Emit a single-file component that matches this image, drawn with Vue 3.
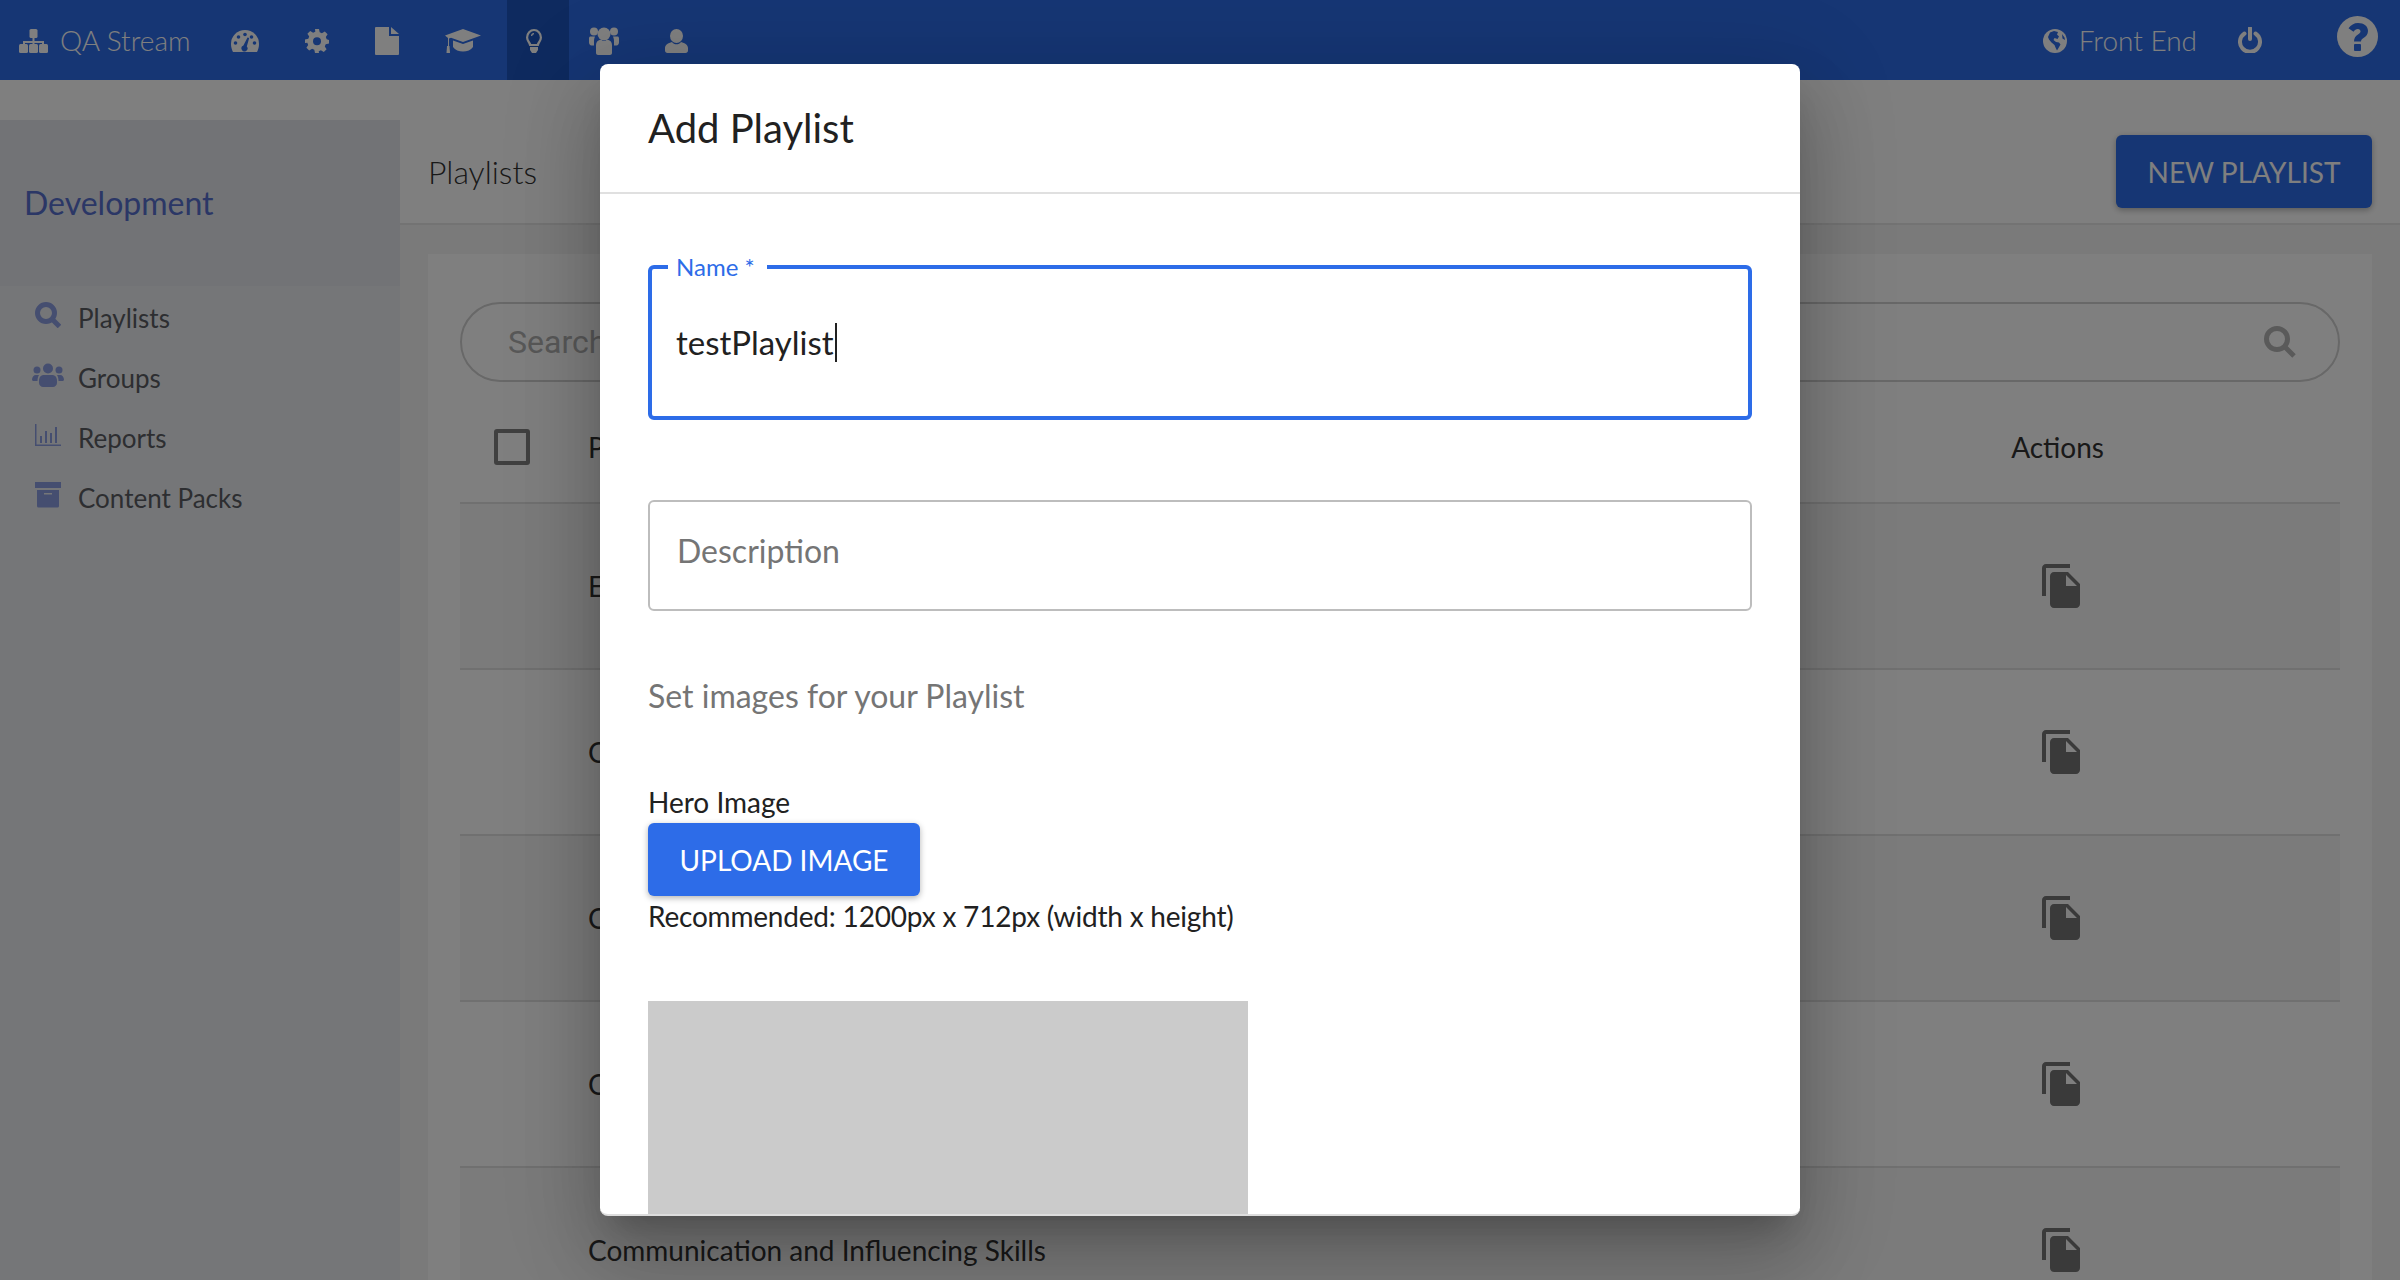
<template>
  <div class="app">
    <header class="topbar">
      <div class="brand">
        <svg class="brand-icon" viewBox="0 0 29 24" width="29" height="24">
          <rect x="10.500" y="0" width="8" height="9" rx="1.500" />
          <path d="M13.500 8h2v4h9.500v5h-2v-3h-7.500v3h-2v-3H6v3H4v-5h9.500z" />
          <rect x="0" y="15" width="9" height="9" rx="1.500" />
          <rect x="10" y="15" width="9" height="9" rx="1.500" />
          <rect x="20" y="15" width="9" height="9" rx="1.500" />
        </svg>
        <span>QA Stream</span>
      </div>
      <nav class="nav">
        <a class="nav-link">
          <svg viewBox="0 0 28 22" width="28" height="22">
            <path d="M14 0a14 14 0 0 1 14 14c0 3-.8 5.800-2 8H2c-1.200-2.200-2-5-2-8A14 14 0 0 1 14 0z" />
            <g class="cut">
              <circle cx="14" cy="4.500" r="1.800" />
              <circle cx="7.500" cy="7" r="1.800" />
              <circle cx="20.500" cy="7" r="1.800" />
              <circle cx="4.500" cy="13" r="1.800" />
              <circle cx="23.500" cy="13" r="1.800" />
              <path d="M16.500 7.500l1.700.6-2.400 8.400a3 3 0 1 1-3.400-.9z" />
            </g>
          </svg>
        </a>
        <a class="nav-link">
          <svg viewBox="0 0 24 24" width="24" height="24">
            <path d="M10 0h4l.7 3.300 2.200.9L19.800 2.400l2.800 2.800-1.800 2.900.9 2.200L24 11v3.500l-3.300.7-.9 2.200 1.800 2.900-2.800 2.800-2.900-1.800-2.200.9L14 24h-4l-.7-3.300-2.200-.9-2.900 1.800-2.800-2.800 1.800-2.900-.9-2.200L0 14v-3.500l3.300-.7.9-2.200-1.800-2.900 2.800-2.800 2.900 1.800 2.200-.9z" />
            <circle class="cut" cx="12" cy="12.200" r="4" />
          </svg>
        </a>
        <a class="nav-link">
          <svg viewBox="0 0 24 28" width="24" height="28">
            <path d="M1 0h13v9h10v18a1 1 0 0 1-1 1H1a1 1 0 0 1-1-1V1a1 1 0 0 1 1-1z" />
            <path d="M16 0l8 7h-8z" />
          </svg>
        </a>
        <a class="nav-link nav-wide">
          <svg viewBox="0 0 36 24" width="36" height="24">
            <path d="M18 0l18 6.500L18 13 6 8.700 4 9.500V17H3V9.100L0 6.500z" />
            <path d="M8 11.500l10 3.500 10-3.500V18c-2 3-6 4.500-10 4.500S10 21 8 18z" />
            <path d="M2 17h2.500l.5 7H1.500z" />
          </svg>
        </a>
        <a class="nav-link nav-active">
          <svg viewBox="0 0 18 24" width="18" height="24">
            <path fill-rule="evenodd" d="M9 0a8 8.500 0 0 1 8 8.500c0 3.200-2.500 5.500-3.300 8.500H4.300C3.500 14 1 11.700 1 8.500A8 8.500 0 0 1 9 0zm0 2a5.800 6.500 0 0 0-5.800 6.500c0 2.500 2 4 3 6.500h5.600c1-2.500 3-4 3-6.500A5.800 6.500 0 0 0 9 2z" />
            <path d="M5 18h8v3l-2 3H7l-2-3z" />
            <path d="M6 7a3 3 0 0 1 3-3v1.200A2 2 0 0 0 7.200 7z" />
          </svg>
        </a>
        <a class="nav-link">
          <svg viewBox="0 0 30 28" width="30" height="28">
            <circle cx="5" cy="4.500" r="4" />
            <circle cx="25" cy="4.500" r="4" />
            <path d="M1 9.500h5c-.6 1.500-1 3-1 5v4H2.500C1 18.500 0 17 0 15.500v-4C0 10.500.5 9.500 1 9.500zM24 9.500h5c.5 0 1 1 1 2v4c0 1.500-1 3-2.500 3H25v-4c0-2-.4-3.500-1-5z" />
            <circle cx="15" cy="7" r="6.500" />
            <path d="M7 18c0-3 2-5 5-5.500 1 1 2 1.500 3 1.500s2-.5 3-1.500c3 .5 5 2.500 5 5.500v8c0 1-1 2-2 2H9c-1 0-2-1-2-2z" />
          </svg>
        </a>
        <a class="nav-link">
          <svg viewBox="0 0 23 24" width="23" height="24">
            <ellipse cx="11.500" cy="7" rx="6.500" ry="7" />
            <path d="M7 13c1 1.500 2.800 2.300 4.500 2.300S15 14.500 16 13c4 1 7 3 7 6v2.500c0 1.500-1 2.500-2.500 2.500h-18C1 24 0 23 0 21.500V19c0-3 3-5 7-6z" />
          </svg>
        </a>
      </nav>
      <div class="topbar-right">
        <svg class="globe" viewBox="0 0 24 24" width="24" height="24">
          <circle cx="12" cy="12" r="12" />
          <path class="cut" d="M7 3.500l4-1.500 4 1-1 2.500 2 2-1.500 2.500-3-1-1 2 2.500 2 3 .5 1.500 2-2 3.500-1.500 2.500-1.500-3-1-2.500-3-2.500-2.500-3L5 8z" />
          <path class="cut" d="M19 5l2.500 3.500L22 11l-2.500-1.500z" />
        </svg>
        <span class="env">Front End</span>
        <svg class="power" viewBox="0 0 24 26" width="24" height="26">
          <path class="stroked" d="M6.500 6.500a10 10 0 1 0 11 0" />
          <path class="stroked" d="M12 1v11" />
        </svg>
        <svg class="help" viewBox="0 0 41 41" width="41" height="41">
          <circle cx="20.500" cy="20.500" r="20.500" />
          <path class="cut" d="M21 7c6 0 10 3 10 8 0 3.500-2 5.300-4.500 7-1.500 1-2.500 1.800-2.500 3.500h-7c0-3.500 1.500-5.300 4-7 1.500-1 2.500-1.800 2.500-3.200 0-1.300-1-2.300-2.700-2.300-1.800 0-3 1-4.300 2.800l-5-3.600C14 9 17 7 21 7z" />
          <rect class="cut" x="17" y="28" width="7" height="7" rx="1" />
        </svg>
      </div>
    </header>

    <div class="strip"></div>

    <div class="layout">
      <aside class="sidebar">
        <div class="sidebar-head">Development</div>
        <ul class="side-menu">
          <li>
            <span class="side-icon">
              <svg viewBox="0 0 26 26" width="26" height="26">
                <circle class="side-stroke" cx="11" cy="11" r="8.500" />
                <path class="side-stroke" d="M17 17l7.500 7.500" />
              </svg>
            </span>
            <span>Playlists</span>
          </li>
          <li>
            <span class="side-icon">
              <svg viewBox="0 0 32 24" width="32" height="24">
                <circle cx="16" cy="5.500" r="5" />
                <circle cx="5" cy="7" r="3.500" />
                <circle cx="27" cy="7" r="3.500" />
                <path d="M0 17c0-3 1.500-5 4-5h3c-1 1.500-1.500 3.500-1.500 6H2c-1 0-2-.5-2-1zM32 17c0-3-1.500-5-4-5h-3c1 1.500 1.500 3.500 1.500 6H30c1 0 2-.5 2-1z" />
                <path d="M7 18c0-4 2-6 5-6h8c3 0 5 2 5 6v2c0 2-2 4-4 4H11c-2 0-4-2-4-4z" />
              </svg>
            </span>
            <span>Groups</span>
          </li>
          <li>
            <span class="side-icon">
              <svg viewBox="0 0 26 22" width="26" height="22">
                <path d="M0 0h1.500v20.500H26V22H0z" />
                <path d="M5 12h2v7H5zM10 7h2v12h-2zM15 9h2v10h-2zM20 3h2v16h-2z" />
              </svg>
            </span>
            <span>Reports</span>
          </li>
          <li>
            <span class="side-icon">
              <svg viewBox="0 0 26 26" width="26" height="26">
                <rect x="0" y="0" width="26" height="6" />
                <path fill-rule="evenodd" d="M2 8h22v16a1.500 1.500 0 0 1-1.500 1.500h-19A1.500 1.500 0 0 1 2 24zm7 3v1.500h8V11z" />
              </svg>
            </span>
            <span>Content Packs</span>
          </li>
        </ul>
      </aside>

      <main class="main">
        <div class="page-head">
          <h1>Playlists</h1>
          <button class="btn-new">NEW PLAYLIST</button>
        </div>
        <section class="card">
          <div class="search">
            <span>Search</span>
            <svg viewBox="0 0 32 32" width="32" height="32">
              <circle cx="13" cy="13" r="10.500" />
              <path d="M21 21l9 9" />
            </svg>
          </div>
          <div class="table-head">
            <span class="checkbox"></span>
            <span class="col-name">Playlist Name</span>
            <span class="col-actions">Actions</span>
          </div>
          <div v-for="row in rows" :key="row" class="row">
            <span class="col-name">{{ row }}</span>
            <svg class="copy" viewBox="0 0 24 24" width="48" height="48">
              <path d="M16 1H4c-1.100 0-2 .9-2 2v14h2V3h12V1zm-1 4l6 6v10c0 1.100-.9 2-2 2H7.990C6.890 23 6 22.100 6 21l.01-14c0-1.100.89-2 1.990-2h7zm-1 7h5.500L14 6.500V12z" />
            </svg>
          </div>
        </section>
      </main>
    </div>

    <div class="overlay">
      <div class="modal">
        <h2 class="modal-title">Add Playlist</h2>
        <div class="modal-body">
          <fieldset class="field field-focus">
            <legend>Name *</legend>
            <div class="field-value">testPlaylist<i class="caret"></i></div>
          </fieldset>
          <div class="field field-plain">Description</div>
          <p class="section-label">Set images for your Playlist</p>
          <div class="hero-label">Hero Image</div>
          <button class="btn-upload">UPLOAD IMAGE</button>
          <div class="hint">Recommended: 1200px x 712px (width x height)</div>
          <div class="hero-preview"></div>
        </div>
      </div>
    </div>
  </div>
</template>

<script setup>
const rows = [
  'Effective Writing',
  'Career Development',
  'Change Management',
  'Coaching Essentials',
  'Communication and Influencing Skills'
]
</script>

<style>
html,
body {
  margin: 0;
  overflow: hidden;
}
</style>

<style scoped>
.app {
  position: relative;
  width: 2400px;
  height: 1280px;
  overflow: hidden;
  background: #fff;
  font-family: Lato, "Liberation Sans", sans-serif;
  color: #333;
}

/* top bar */
.topbar {
  display: flex;
  align-items: center;
  height: 80px;
  background: #2d6ce8;
  color: #fff;
  fill: #fff;
}

.brand {
  display: flex;
  align-items: center;
  gap: 12px;
  width: 213px;
  padding-left: 19px;
  box-sizing: border-box;
  font-size: 28px;
  font-weight: 300;
}

.brand-icon {
  flex: none;
  margin-top: 2px;
}

.nav {
  display: flex;
  gap: 10px;
  height: 80px;
}

.nav-link {
  display: flex;
  align-items: center;
  padding: 2px 18px 0;
}

.nav-wide {
  margin-right: -2px;
}

.nav-active {
  margin-right: -8px;
  padding-right: 26px;
  background: #1c54be;
}

.cut {
  fill: #2d6ce8;
}

.topbar-right {
  display: flex;
  align-items: center;
  margin-left: auto;
  padding-right: 22px;
}

.env {
  margin-left: 12px;
  font-size: 28px;
  font-weight: 300;
}

.globe {
  margin-top: 2px;
}

.power {
  margin-left: 41px;
}

.stroked {
  fill: none;
  stroke: #fff;
  stroke-width: 4;
  stroke-linecap: round;
}

.help {
  margin-left: 75px;
  margin-top: -7px;
}

.strip {
  height: 40px;
  background: #fff;
}

.layout {
  display: flex;
  height: 1160px;
}

/* sidebar */
.sidebar {
  flex: none;
  width: 400px;
  background: #ebedf1;
}

.sidebar-head {
  height: 166px;
  padding: 63px 0 0 24px;
  box-sizing: border-box;
  background: #e4e6ec;
  color: #566ecc;
  font-size: 32px;
  line-height: 40px;
}

.side-menu {
  margin: 0;
  padding: 2px 0 0;
  list-style: none;
}

.side-menu li {
  display: flex;
  align-items: center;
  height: 60px;
  padding-left: 32px;
  color: #5a5c62;
  font-size: 26px;
  fill: #8a9ce0;
}

.side-icon {
  display: flex;
  justify-content: center;
  width: 32px;
  margin-right: 14px;
  margin-top: -6px;
}

.side-stroke {
  fill: none;
  stroke: #8a9ce0;
  stroke-width: 5;
}

/* main */
.main {
  flex: 1;
  min-width: 0;
  background: #f5f5f5;
}

.page-head {
  display: flex;
  align-items: center;
  justify-content: space-between;
  height: 105px;
  padding: 0 28px;
  box-sizing: border-box;
  background: #fff;
  border-bottom: 2px solid #e6e6e6;
}

.page-head h1 {
  margin: 0;
  font-size: 32px;
  font-weight: 300;
  color: #333;
}

.btn-new {
  width: 256px;
  height: 73px;
  border: none;
  border-radius: 6px;
  background: #2d6ce8;
  box-shadow: 0 2px 6px rgba(0, 0, 0, 0.3);
  color: #fff;
  font: 400 28px Lato, sans-serif;
}

.card {
  width: 1944px;
  height: 1060px;
  margin: 29px 0 0 28px;
  padding: 48px 32px 0;
  box-sizing: border-box;
  background: #fff;
}

.search {
  display: flex;
  align-items: center;
  justify-content: space-between;
  height: 80px;
  padding: 0 42px 0 46px;
  box-sizing: border-box;
  border: 2px solid #d0d0d0;
  border-radius: 40px;
  color: #b0b0b0;
  font: 400 32px Roboto, sans-serif;
}

.search svg {
  fill: none;
  stroke: #b4b4b4;
  stroke-width: 5;
}

.table-head {
  display: flex;
  align-items: center;
  height: 120px;
  padding: 10px 0 0 34px;
  box-sizing: border-box;
  font-size: 28px;
}

.checkbox {
  flex: none;
  width: 36px;
  height: 36px;
  margin-right: 58px;
  box-sizing: border-box;
  border: 4px solid #808080;
  border-radius: 3px;
}

.col-actions {
  margin-left: auto;
  margin-right: 236px;
}

.row {
  display: flex;
  align-items: center;
  justify-content: space-between;
  height: 164px;
  padding: 0 254px 0 128px;
  border-top: 2px solid #e0e0e0;
  font-size: 28px;
}

.row:nth-of-type(odd) {
  background: #f7f7f7;
}

.copy {
  fill: #757575;
}

/* dialog */
.overlay {
  position: absolute;
  inset: 0;
  display: flex;
  align-items: center;
  justify-content: center;
  background: rgba(0, 0, 0, 0.5);
}

.modal {
  width: 1200px;
  height: 1152px;
  overflow: hidden;
  border-radius: 8px;
  background: #fff;
  box-shadow: 0 22px 30px -14px rgba(0, 0, 0, 0.2), 0 48px 76px 6px rgba(0, 0, 0, 0.14), 0 18px 92px 16px rgba(0, 0, 0, 0.12);
  border-bottom: 2px solid #ddd;
  box-sizing: border-box;
  color: #212121;
}

.modal-title {
  height: 130px;
  margin: 0;
  padding: 0 48px;
  box-sizing: border-box;
  border-bottom: 2px solid #e0e0e0;
  font-size: 40px;
  font-weight: 400;
  line-height: 128px;
}

.modal-body {
  padding: 61px 48px 0;
}

.field {
  box-sizing: border-box;
  width: 1104px;
  border-radius: 6px;
}

.field-focus {
  height: 165px;
  margin: 0;
  padding: 0 24px;
  border: 4px solid #2d6ce8;
}

.field-focus legend {
  margin-left: -8px;
  padding: 0 12px 0 8px;
  color: #2d6ce8;
  font-size: 24px;
  line-height: 24px;
}

.field-value {
  display: flex;
  align-items: center;
  height: 100px;
  margin-top: 13px;
  font-size: 33px;
}

.caret {
  width: 2px;
  height: 39px;
  margin-left: 1px;
  background: #212121;
}

.field-plain {
  height: 111px;
  margin-top: 80px;
  padding: 29px 27px;
  border: 2px solid #bdbdbd;
  color: #757575;
  font-size: 32px;
  line-height: 40px;
}

.section-label {
  margin: 64px 0 0;
  color: #757575;
  font-size: 32px;
  line-height: 42px;
}

.hero-label {
  margin-top: 67px;
  font-size: 28px;
  line-height: 36px;
}

.btn-upload {
  display: block;
  width: 272px;
  height: 73px;
  margin-top: 3px;
  border: none;
  border-radius: 6px;
  background: #2d6ce8;
  box-shadow: 0 2px 6px rgba(0, 0, 0, 0.3);
  color: #fff;
  font: 400 28px Lato, sans-serif;
}

.hint {
  margin-top: 2px;
  font-size: 28px;
  line-height: 36px;
  letter-spacing: -0.2px;
}

.hero-preview {
  width: 600px;
  height: 260px;
  margin-top: 67px;
  background: #cbcbcb;
}
</style>
